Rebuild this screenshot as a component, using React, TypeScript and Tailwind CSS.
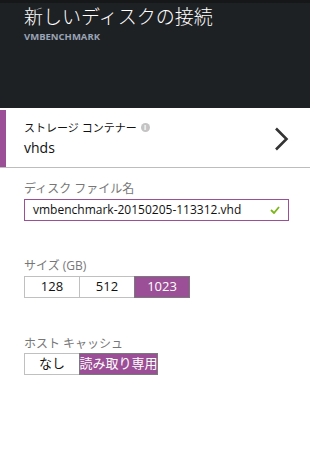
const font = { fontFamily: '"Open Sans", "Noto Sans CJK JP", sans-serif' }

function Segment({ items, active, widths }: { items: string[]; active: number; widths: string[] }) {
  return (
    <div className="flex">
      {items.map((label, i) => (
        <div
          key={label}
          className={
            i === active
              ? 'flex h-[22px] items-center justify-center whitespace-nowrap border border-[#7a7a7a] bg-[#9b4f96] text-[13px] text-white ' + widths[i] + (i > 0 ? ' -ml-px' : '')
              : 'flex h-[22px] items-center justify-center whitespace-nowrap border border-[#c0c0c0] bg-white text-[13px] text-[#111] ' + widths[i] + (i > 0 ? ' -ml-px' : '')
          }
        >
          {label}
        </div>
      ))}
    </div>
  )
}

export default function App() {
  return (
    <div className="h-[458px] w-[310px] overflow-hidden bg-white" style={font}>
      {/* Header */}
      <header className="h-[108px] border-t-[3px] border-[#161719] bg-[#1e2124] px-6 pt-[3px]">
        <h1 className="text-[19px] leading-[22px] font-light text-white">新しいディスクの接続</h1>
        <p className="mt-[3px] text-[9.5px] font-bold leading-3 text-[#9aa4b4]">VMBENCHMARK</p>
      </header>

      {/* Storage container */}
      <div className="mt-[2px] flex h-[58px] border-b border-[#bdbdbd]">
        <div className="w-[6px] bg-[#9b4f96]" />
        <div className="flex flex-1 items-center justify-between pl-[18px] pr-[21px]">
          <div>
            <div className="flex items-center gap-1 text-[11px] leading-4 text-[#111]">
              ストレージ コンテナー
              <span className="flex h-[9px] w-[9px] items-center justify-center rounded-full bg-[#c4c4c4] text-[7px] font-bold leading-none text-white">i</span>
            </div>
            <div className="mt-[2px] text-[14px] leading-5 text-[#111]">vhds</div>
          </div>
          <svg width="15" height="24" viewBox="0 0 15 24">
            <path d="M2 1.5 L12.5 12 L2 22.5" fill="none" stroke="#333" strokeWidth="2.6" />
          </svg>
        </div>
      </div>

      <div className="px-6">
        <p className="mt-[13px] text-[12px] leading-4 text-[#777]">ディスク ファイル名</p>
        <div className="mt-[2px] flex h-[22px] w-[265px] items-center justify-between border border-[#9b4f96] pl-2 pr-2">
          <span className="text-[12px] text-[#111]">vmbenchmark-20150205-113312.vhd</span>
          <svg width="10" height="8" viewBox="0 0 10 8">
            <path d="M1 4 L4 7 L9 1" fill="none" stroke="#7cb518" strokeWidth="1.8" />
          </svg>
        </div>

        <p className="mt-[37px] text-[12px] leading-4 text-[#777]">サイズ (GB)</p>
        <div className="mt-[2px]">
          <Segment items={['128', '512', '1023']} active={2} widths={['w-[56px]', 'w-[56px]', 'w-[56px]']} />
        </div>

        <p className="mt-[38px] text-[12px] leading-4 text-[#777]">ホスト キャッシュ</p>
        <div className="mt-[1px]">
          <Segment items={['なし', '読み取り専用']} active={1} widths={['w-[56px]', 'w-[79px]']} />
        </div>
      </div>
    </div>
  )
}
